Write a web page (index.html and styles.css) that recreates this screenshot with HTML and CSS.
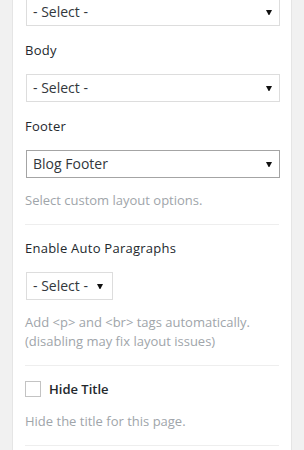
FILE: index.html
```html
<!DOCTYPE html>
<html>
<head>
<meta charset="utf-8">
<link rel="stylesheet" href="styles.css">
</head>
<body>
<div class="panel">
  <div class="section">
    <div class="select"><span class="select-text">- Select -</span><svg class="arrow" width="6" height="5" viewBox="0 0 6 5"><path d="M0 0H6L3.4 5H2.6Z" fill="#111"/></svg></div>
    <div class="label">Body</div>
    <div class="select"><span class="select-text">- Select -</span><svg class="arrow" width="6" height="5" viewBox="0 0 6 5"><path d="M0 0H6L3.4 5H2.6Z" fill="#111"/></svg></div>
    <div class="label">Footer</div>
    <div class="select focused"><span class="select-text">Blog Footer</span><svg class="arrow" width="6" height="5" viewBox="0 0 6 5"><path d="M0 0H6L3.4 5H2.6Z" fill="#111"/></svg></div>
    <p class="help">Select custom layout options.</p>
  </div>
  <div class="section">
    <div class="label first">Enable Auto Paragraphs</div>
    <div class="select small"><span class="select-text">- Select -</span><svg class="arrow" width="6" height="5" viewBox="0 0 6 5"><path d="M0 0H6L3.4 5H2.6Z" fill="#111"/></svg></div>
    <p class="help">Add &lt;p&gt; and &lt;br&gt; tags automatically.<br>(disabling may fix layout issues)</p>
  </div>
  <div class="section">
    <label class="check-row"><span class="checkbox"></span><span class="check-label">Hide Title</span></label>
    <p class="help">Hide the title for this page.</p>
  </div>
</div>
</body>
</html>
```
FILE: styles.css
```css
html, body {
  margin: 0;
  padding: 0;
  background: #f1f1f1;
  height: 100%;
  overflow: hidden;
}
body {
  font-family: "Open Sans", "Liberation Sans", sans-serif;
  color: #32373c;
}
.panel {
  margin: -2px 0 0 12px;
  width: 254px;
  padding: 0 12px;
  background: #fff;
  border-left: 1px solid #e5e5e5;
  border-right: 1px solid #e5e5e5;
  min-height: 480px;
}
.section {
  padding-bottom: 14px;
  border-bottom: 1px solid #eeeeee;
}
.section + .section {
  padding-top: 13px;
}
.label {
  font-size: 13px;
  font-weight: 500;
  line-height: 20px;
  margin: 14px 0;
  color: #23282d;
  letter-spacing: 0.25px;
}
.label.first {
  margin-top: 0;
}
.select {
  box-sizing: border-box;
  height: 28px;
  margin-left: 1px;
  width: 254px;
  border: 1px solid #dddddd;
  background: #fff;
  display: flex;
  align-items: center;
  justify-content: space-between;
  padding: 0 7px 0 6px;
  font-size: 14px;
  color: #32373c;
}
.select.focused {
  border-color: #a4a4a4;
}
.select.small {
  display: inline-flex;
  width: auto;
  gap: 9px;
  padding-right: 9px;
}
.select-text {
  line-height: 20px;
}
.arrow {
  display: block;
  flex: none;
}
.help {
  margin: 13px 0 0;
  font-size: 13px;
  line-height: 19px;
  color: #a0a5aa;
}
.check-row {
  display: flex;
  align-items: center;
  gap: 8px;
  height: 20px;
  margin-top: 0;
}
.checkbox {
  box-sizing: border-box;
  width: 16px;
  height: 16px;
  border: 1px solid #c3c3c3;
  background: #fff;
  flex: none;
}
.check-label {
  font-size: 13px;
  font-weight: 600;
  color: #23282d;
}
.check-row + .help {
  margin-top: 13px;
}
```
